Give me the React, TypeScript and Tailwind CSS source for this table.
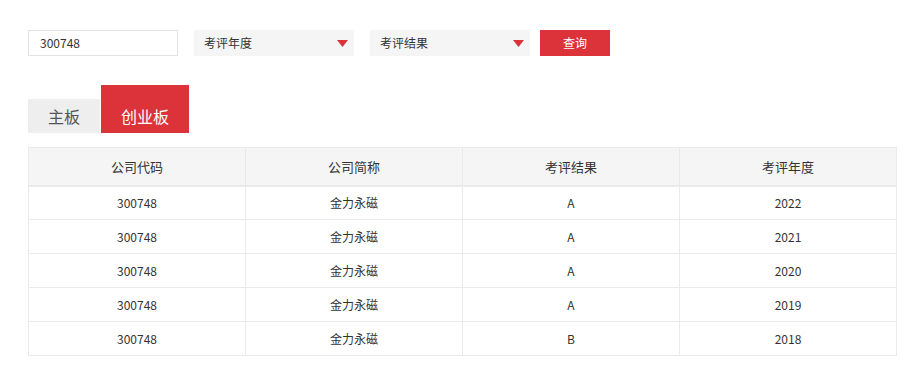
import React from 'react';

const rows = [
  { code: '300748', name: '金力永磁', result: 'A', year: '2022' },
  { code: '300748', name: '金力永磁', result: 'A', year: '2021' },
  { code: '300748', name: '金力永磁', result: 'A', year: '2020' },
  { code: '300748', name: '金力永磁', result: 'A', year: '2019' },
  { code: '300748', name: '金力永磁', result: 'B', year: '2018' },
];

function Caret() {
  return (
    <svg width="11" height="7" viewBox="0 0 11 7" className="shrink-0">
      <path d="M0 0H11L5.5 7Z" fill="#dc3239" />
    </svg>
  );
}

function SelectBox({ label }: { label: string }) {
  return (
    <div className="flex h-[26px] w-[160px] items-center justify-between bg-[#f5f5f5] pl-[10px] pr-[6px] text-[12px] text-[#333]">
      <span>{label}</span>
      <Caret />
    </div>
  );
}

export default function App() {
  return (
    <div className="min-h-[375px] w-[920px] bg-white pl-[28px] pt-[30px] text-[#333]" style={{ fontFamily: '"Noto Sans CJK SC", "Noto Sans", sans-serif' }}>
      <div className="flex items-center">
        <div className="flex h-[26px] w-[150px] items-center border border-[#e3e3e3] px-[11px] text-[12px]">300748</div>
        <div className="ml-[16px]"><SelectBox label="考评年度" /></div>
        <div className="ml-[16px]"><SelectBox label="考评结果" /></div>
        <button className="ml-[10px] h-[26px] w-[70px] bg-[#dc3239] text-[12px] text-white">查询</button>
      </div>

      <div className="mt-[29px] flex items-end">
        <div className="flex h-[34px] w-[72px] items-center justify-center bg-[#eeeeee] text-[16px] text-[#555]">主板</div>
        <div className="ml-px flex h-[48px] w-[88px] items-center justify-center bg-[#dc3239] pt-[14px] text-[16px] text-white">创业板</div>
      </div>

      <table className="mt-[14px] w-[869px] table-fixed border-collapse text-center text-[12px]">
        <thead>
          <tr className="h-[38px] bg-[#f5f5f5] text-[13px]">
            <th className="border border-b-2 border-[#eaeaea] font-normal">公司代码</th>
            <th className="border border-b-2 border-[#eaeaea] font-normal">公司简称</th>
            <th className="border border-b-2 border-[#eaeaea] font-normal">考评结果</th>
            <th className="border border-b-2 border-[#eaeaea] font-normal">考评年度</th>
          </tr>
        </thead>
        <tbody>
          {rows.map((r) => (
            <tr key={r.year} className="h-[34px]">
              <td className="border border-[#eaeaea]">{r.code}</td>
              <td className="border border-[#eaeaea]">{r.name}</td>
              <td className="border border-[#eaeaea]">{r.result}</td>
              <td className="border border-[#eaeaea]">{r.year}</td>
            </tr>
          ))}
        </tbody>
      </table>
    </div>
  );
}
